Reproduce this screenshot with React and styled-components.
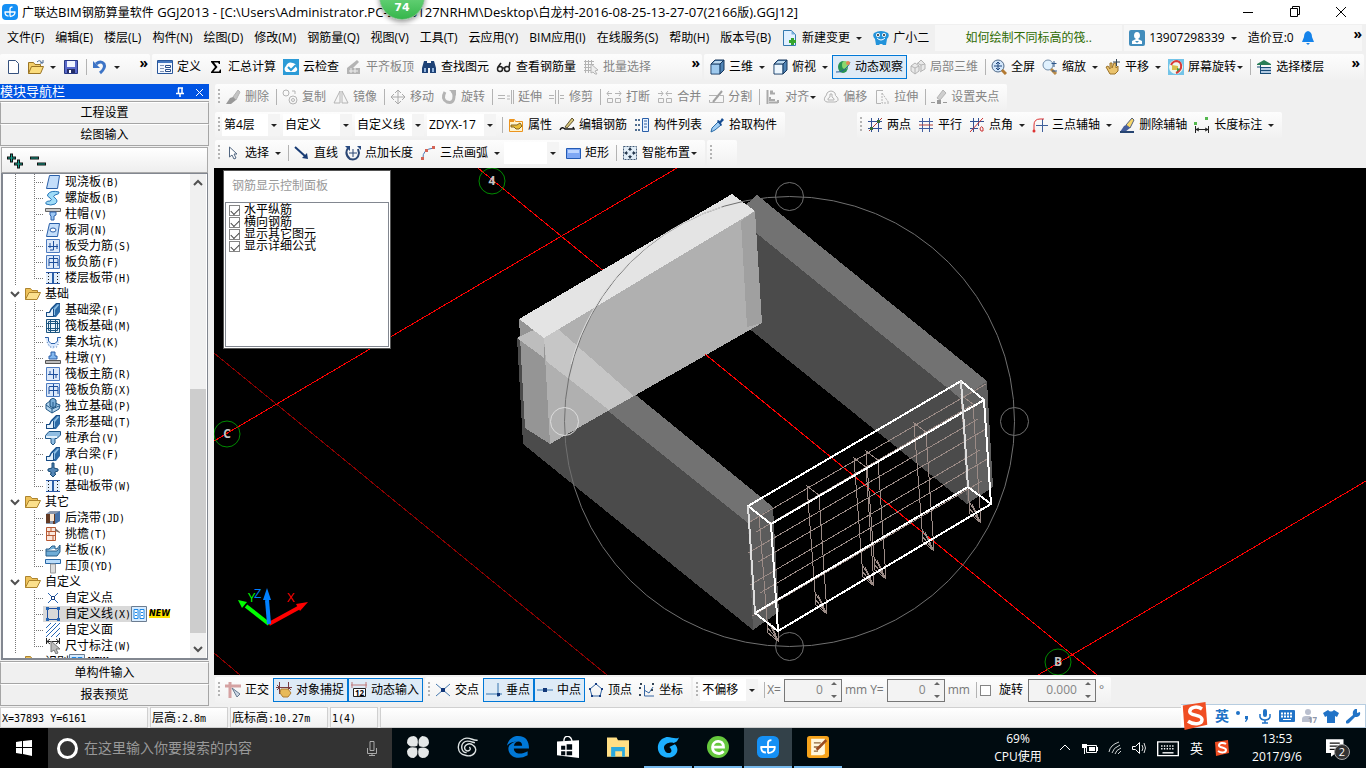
import React from "react";
import styled, { createGlobalStyle, css } from "styled-components";

const UI_FONT = '"Open Sans", "Noto Sans CJK SC", sans-serif';
const FIXED_FONT = '"DejaVu Sans Mono", "Noto Sans CJK SC", monospace';

const GlobalStyle = createGlobalStyle`
  * { box-sizing: border-box; }
  body {
    margin: 0;
    overflow: hidden;
    background: #f0f0f0;
    color: #000;
    font: 12px/16px ${UI_FONT};
  }
  button, input, select {
    margin: 0;
    padding: 0;
    border: 0;
    background: none;
    color: inherit;
    font: inherit;
  }
  button { white-space: nowrap; }
`;

/* ---------- icons, all on a 16px grid ---------- */

const B = "#2a5fa8";
const G = "#b4b4b4";

const line = (d, stroke, strokeWidth = 1) => (
  <path d={d} fill="none" stroke={stroke} strokeWidth={strokeWidth} />
);

const foundation = (
  <>
    <path d="M1 15V10H4L6 6L11 1H15V10L11 15Z" fill="#2d6ba6" />
    <path d="M2 14V11H5L7 7H8V14Z" fill="#e4f1fc" />
    <path d="M8 7L13 2L14 3L10 8V13H9Z" fill="#8cbfe6" />
    {line("M1.500 14.500V10.500H4.500L6.500 6.500L11.500 1.500H15M8.500 7V14.500H1.500", "#174a82")}
  </>
);

const plate = (
  <path d="M4.500 1.500H14.500L12.500 14.500H1.500Z" fill="#c4defa" stroke={B} />
);

const strip = (
  <>
    <path d="M1 2h14v11H1z" fill="#e3effc" />
    {line("M1 2.500H15M1 13.500H15", "#2b58a5")}
    {line("M8 3V13", B, 2)}
    <path d="M3.500 3V13M12.500 3V13" stroke="#222" strokeDasharray="1 2" />
  </>
);

const rebar = (d) => (
  <>
    <path d="M1.500 1.500h13v13h-13z" fill="#dce9fa" stroke="#4e7cc0" />
    {line(d, "#1d4f9c")}
  </>
);

const box3d = (front) => (
  <>
    <path d="M2 5L6 1H15V11L11 15H2Z" fill="#4f83b4" stroke="#17375c" />
    <path d="M2.500 5.500h8v9h-8z" fill={front} />
    <path d="M3 5L6 2H14L11 5Z" fill="#bcd9f0" />
    {line("M2 5H11V15M11 5L15 1", "#17375c")}
  </>
);

const sogou = (
  <>
    <path d="M1 2L14 0L15 13L2 16Z" fill="#f04e23" />
    <path
      d="M12 4C9 2 5 3 5 5.500C5 8 12 7 12 10C12 13 7 13 4 11"
      fill="none"
      stroke="#fff"
      strokeWidth="2"
    />
  </>
);

const glodon = (
  <>
    <rect width="16" height="16" rx="4" fill="#1590f5" />
    <path
      d="M2.500 8H13.500M8 12.500V5Q8 3 10.500 3M3 8Q3 12 6.500 12M13 8Q13 12 8 12.500"
      fill="none"
      stroke="#fff"
      strokeWidth="1.300"
    />
  </>
);

const newPanel = (
  <>
    <path d="M.5.5h15v15H.500z" fill="#d6ebff" stroke="#6b7c90" />
    <path d="M3 3.500h4v9H3zM9 3.500h4v9H9z" fill="#fff" stroke="#1e88e5" />
    {line("M4 6.500H6M4 9.500H6M10 6.500H12M10 9.500H12", "#1e88e5")}
  </>
);

const icons = {
  glodon,
  sogou,
  foundation,
  plate,
  strip,
  newPanel,
  file: <path d="M3.500 1.500H10.500L13.500 4.500V14.500H3.500Z" fill="#fff" stroke="#35517e" />,
  fileAdd: (
    <>
      <path d="M1.500.5H9.500L13.500 4.500V15.500H1.500Z" fill="#e1f0ff" stroke="#3579ae" />
      <path d="M9.500.5V4.500H13.500Z" fill="#79afd9" />
      <path d="M9 8H12V10H14V13H12V15H9V13H7V10H9Z" fill="#35a52b" />
    </>
  ),
  open: (
    <>
      <path d="M.5 14.500V3.500H5.500L7 5.500H12.500V8" fill="#f3ce6a" stroke="#9a7424" />
      <path d="M.5 14.500L3.500 7.500H15.500L12.500 14.500Z" fill="#fbdc7c" stroke="#9a7424" />
      {line("M9 3Q12 0 14 4M12 4H15V1", "#47668e")}
    </>
  ),
  folder: (
    <>
      <path d="M.5 13.500V2.500H5.500L7 4.500H12.500V7" fill="#eec25a" stroke="#ad842e" />
      <path d="M.5 13.500L4 6.500H15.500L12 13.500Z" fill="#fce08c" stroke="#ad842e" />
    </>
  ),
  save: (
    <>
      <path d="M1.500 1.500h13v13h-13z" fill="#5969ca" stroke="#293984" />
      <path d="M4 2h8v6H4z" fill="#f0f4ff" />
      <path d="M4 10h8v4H4z" fill="#252e68" />
      <path d="M6 11h2v3H6z" fill="#fff" />
    </>
  ),
  undo: (
    <>
      {line("M4 5Q9 1 12 5Q14 9 8 14", "#3d74c6", 3)}
      <path d="M1 2V9H8Z" fill="#3d74c6" />
    </>
  ),
  define: (
    <>
      <path d="M.5 1.500h15v13H.5z" fill="#f4f8ff" stroke="#28569b" />
      <path d="M1 2h14v2H1z" fill="#4678bf" />
      {line("M3 6.500H7M3 9.500H7M3 12.500H7", "#7f93b5")}
      <path d="M8.500 6.500h5v2h-5zM8.500 10.500h5v2h-5z" fill="#fff" stroke="#294d88" />
    </>
  ),
  sigma: <path d="M3 2H12V5H11L10 3.500H6L9.500 8L5.500 12.500H11L12 10.500H13V14H3V13L7 8L3 3Z" />,
  cloud: (
    <>
      <path d="M0 0h16v16H0z" fill="#2c9bd7" />
      <path d="M3 13Q0 10 3 7Q5 2 10 4Q14 5 13 8Q16 11 12 13Z" fill="#fff" />
      {line("M5 8L8 11L13 6", "#2c9bd7", 2)}
    </>
  ),
  flush: (
    <>
      <path d="M1 9L11 1L13 3L7 9H14V15H1Z" fill={G} />
      {line("M3 12H12M5 9V14M9 9V14", "#eee")}
    </>
  ),
  find: (
    <>
      <path d="M3 2H6V4H10V2H13L15 9V14H9V9H7V14H1V9Z" fill="#1e4276" />
      <path d="M3 9h2v4H3zM11 9h2v4h-2z" fill="#91b4df" />
    </>
  ),
  glasses: (
    <g fill="none" stroke="#222" strokeWidth="1.500">
      <circle cx="4" cy="10" r="2.500" />
      <circle cx="11" cy="10" r="2.500" />
      <path d="M7 9H8M2 8L5 4M13 8L14 3" />
    </g>
  ),
  batch: (
    <>
      {line("M1 2.500H11M1 5.500H11M1 8.500H8M1 11.500H8M2.500 1V14M5.500 1V14M8.500 1V10", G)}
      <path d="M8 5L15 11L12 12L14 15H12L10 13L8 14Z" fill="#eee" stroke={G} />
    </>
  ),
  cube: box3d("#9ec9ed"),
  cubeTop: box3d("#edf6fd"),
  orbit: (
    <>
      <ellipse cx="8" cy="8" rx="5" ry="6" fill="#289352" />
      <ellipse cx="10" cy="6" rx="3" ry="4" fill="#8bd66e" />
      <path d="M1 13Q6 14 10 10Q14 7 15 3" fill="none" stroke="#275f9c" />
      <circle cx="13" cy="4" r="2" fill="#e38752" />
    </>
  ),
  cubes: (
    <path
      d="M1 7L5 4L9 7V12L5 15L1 12ZM5 9L9 7M5 9V15M5 9L1 7M7 5L11 1L15 5V10L10 13M11 6L15 5M11 6V12M7 4L11 6"
      fill="#e9e9e9"
      stroke={G}
    />
  ),
  full: (
    <>
      <circle cx="7" cy="7" r="6" fill="#d3e7fb" stroke="#526b89" />
      <path d="M11 11L15 15" stroke="#b37a32" strokeWidth="3" />
      {line("M3 7H11M7 3V11M5 5L7 3L9 5M5 9L7 11L9 9", "#20477d")}
    </>
  ),
  zoom: (
    <>
      <circle cx="6" cy="6" r="5" fill="#e0f1fe" stroke="#728ca8" />
      <path d="M9 10L14 15" stroke="#b98b49" strokeWidth="3" />
      {line("M12 2V8M9.500 4.500H14.500M10 12H15", "#2d568a")}
    </>
  ),
  pan: (
    <>
      <path d="M1 8L3 7L5 10V4H7V9L9 4H11V9L13 7V12L10 15H5Z" fill="#eac36d" stroke="#9b722a" />
      {line("M8 3H15M11.500 0V7", "#345")}
    </>
  ),
  rotateScreen: (
    <>
      <path d="M0 0h16v16H0z" fill="#73c4e8" />
      <circle cx="8" cy="8" r="7" fill="#eef7ef" />
      {line("M3 6Q5 2 9 2Q14 3 13 9Q11 13 8 14", "#d83b38", 2)}
      <path d="M4 6l6 1v4H4z" fill="#d9c04a" />
      <path d="M9 9l3 1-3 3z" fill="#3c9b49" />
    </>
  ),
  floors: (
    <>
      <path d="M1 5L8 1L15 5V6H1Z" fill="#287d56" />
      {line("M4.500 6V15M4 8.500H15M4 11.500H15M4 14.500H15M1 8H4", "#174b76")}
      {line("M5 10H15M5 13H15", "#6f9fd0")}
    </>
  ),
  brushGray: (
    <>
      <path d="M8 8L13 1L15 3L11 11Z" fill="#c4c4c4" stroke={G} />
      <path d="M8 8L11 11L6 15H1L5 9Z" fill="#999" />
    </>
  ),
  copy: (
    <g fill="none" stroke={G}>
      <circle cx="4" cy="4" r="3" />
      <circle cx="11" cy="11" r="4" />
      <circle cx="11" cy="11" r="1.500" />
      <path d="M10 2H13V5" />
    </g>
  ),
  mirror: line("M7 2V14H1ZM9 2V14H15Z", G),
  move: line("M1 8H15M8 1V15M5 4L8 1L11 4M5 12L8 15L11 12M4 5L1 8L4 11M12 5L15 8L12 11", "#aaa"),
  rotate: (
    <>
      {line("M4 3Q0 10 6 13Q13 15 13 7Q13 4 11 2", G, 3)}
      <path d="M8 1H15V7Z" fill={G} />
    </>
  ),
  extend: line("M0 6.500H7M0 9.500H7M9 7H12M9 10H12M13.500 1V15M15.500 1V15", G),
  trim: line("M0 6.500H5M0 9.500H5M6.500 1V15M9.500 1V15M11 6.500H15M11 9.500H15", G),
  breakUp: line("M1 4.500H6M3 2L1 4.500L3 7M9 4.500H15M13 2L15 4.500L13 7M1.500 9.500H6.500V13.500H1.500ZM9.500 9.500H14.500V13.500H9.500Z", G),
  merge: line("M1 4.500H6M4 2L6 4.500L4 7M9 4.500H15M11 2L9 4.500L11 7M1.500 9.500H6.500V13.500H1.500ZM9.500 9.500H14.500V13.500H9.500Z", G),
  split: (
    <>
      {line("M1 6.500H9M12 6.500H15.500V13.500H1.500V11", G)}
      {line("M5 13L14 2", "#a1a1a1", 2)}
    </>
  ),
  align: line("M2.500 1V15M5 4.500H10M5 2.500H8M5 8V11H10M4 13.500H13M13 11V14", "#aaa", 2),
  offset: (
    <g fill="none" stroke={G}>
      <path d="M4 13Q0 12 2 8Q4 6 4 4Q8 0 12 4Q12 7 14 8Q17 12 12 13Z" />
      <path d="M5 10Q5 9 7 8L7 5H9V8Q12 10 11 11H5Z" />
    </g>
  ),
  stretch: (
    <>
      {line("M9 1.500H2.500V14.500H7", G)}
      <path d="M8 4V14H15Z" fill="none" stroke={G} strokeDasharray="2 1" />
    </>
  ),
  gripEdit: (
    <>
      <path d="M6 9L12 1L15 4L9 11Z" fill="#cecece" stroke={G} />
      <path d="M0 13h4v1H0zM6 11h4v4H6zM12 13h4v1h-4z" fill="#999" />
    </>
  ),
  props: (
    <>
      <path d="M1.500 2.500h5l1 2h7v10h-13z" fill="#fff3cc" stroke="#ec941e" />
      <path d="M2 3h4v2H2z" fill="#ec941e" />
      <path d="M3 8h6L12 6l2 3-3 3H8L6 10H3z" fill="#e9bd35" stroke="#806323" />
    </>
  ),
  editBar: (
    <>
      <path d="M1 13Q3 9 6 12H15L14 10" fill="none" stroke="#111" strokeWidth="1.500" />
      <path d="M6 10L13 1L15 3L8 11Z" fill="#d9c77a" stroke="#625635" />
    </>
  ),
  list: (
    <>
      <path d="M8.500 1.500h6v13h-6z" fill="#e7f1ff" stroke={B} />
      {line("M10 4H13M10 7H13M10 10H13", "#315f9d")}
      <path d="M1 2h2v2H1zM1 7h2v2H1zM1 12h2v2H1zM4 2h2v2H4zM4 7h2v2H4zM4 12h2v2H4z" fill="#506e91" />
    </>
  ),
  pick: (
    <>
      <path d="M2 15L3 11L9 5L12 8L6 13Z" fill="#9fcdf5" stroke="#2a6ba6" />
      <path d="M8 4L9 3L11 4L13 1L15 3L12 6L13 8L12 9Z" fill="#174d92" />
    </>
  ),
  arrow: <path d="M4.500 2V12L7 10L9 14L11 13L9 9H12Z" fill="#fff" stroke="#516681" />,
  lineTool: (
    <>
      {line("M1 2L12 12", "#183b74", 2)}
      <path d="M14 14L8 13L13 8Z" fill="#183b74" />
    </>
  ),
  pointLength: (
    <>
      {line("M3 3Q-1 9 5 14Q13 16 14 8L13 4", "#2a4674", 2)}
      {line("M8 4V12M4 8H12", "#2a4674")}
      <path d="M0 1H5V6ZM12 1H16V5Z" fill="#294a80" />
    </>
  ),
  arc: (
    <>
      {line("M3 14Q2 4 14 3", "#4e7bb5")}
      <path d="M1 12h3v3H1zM5 4h3v3H5zM12 1h3v3h-3z" fill="#d46456" />
    </>
  ),
  rect: (
    <>
      <path d="M1.500 3.500h14v10h-14z" fill="#7ea7f4" stroke="#235ab4" />
      <path d="M3 5h11v3H3z" fill="#bdd5ff" />
    </>
  ),
  smart: (
    <>
      <path d="M1.500 1.500h13v13h-13z" fill="#e1edf7" stroke="#425a76" strokeDasharray="2 1" />
      <path d="M8 2L10 5H6ZM8 14L10 11H6ZM2 8L5 6V10ZM14 8L11 6V10Z" fill="#24364c" />
      {line("M8 4V6M8 10V12M4 8H6M10 8H12", "#24364c")}
    </>
  ),
  twoPoint: (
    <>
      {line("M1 4.500H15M1 11.500H15M4.500 1V15M11.500 1V15", "#335394")}
      {line("M2 14L15 1", "#b13e38")}
      <path d="M3 10h3v3H3zM10 3h3v3h-3z" fill="#376b34" />
    </>
  ),
  parallel: (
    <>
      {line("M1 4.500H15M1 11.500H15M4.500 1V15M11.500 1V15", "#405da0")}
      {line("M1 8H15", "#b13e38")}
    </>
  ),
  pointAngle: (
    <>
      {line("M1 4.500H15M1 11.500H9M4.500 1V15M9.500 1V9", "#335394")}
      {line("M1 15L14 1M11 12Q12 8 14 11V14H12Z", "#c33")}
    </>
  ),
  threePoint: (
    <>
      {line("M4 8.500H16M10.500 2V15", "#3e5f9b")}
      {line("M2 13V8Q2 2 8 2H12", "#d33")}
      <circle cx="2" cy="14" r="1.500" fill="#d33" />
    </>
  ),
  brush: (
    <>
      <path d="M7 8L13 1L15 3L11 11Z" fill="#f8d76a" stroke="#54617b" />
      <path d="M7 8L11 11L6 15H1L5 9Z" fill="#455e9c" />
      <path d="M1 14h14v2H1z" fill="#274572" />
    </>
  ),
  dimension: (
    <>
      <path d="M0 5h3v3H0zM11 0h3v3h-3z" fill="#54b84e" />
      {line("M1.500 9V16M14.500 9V16M2 12.500H14M5 11L2 12.500L5 14M11 11L14 12.500L11 14", "#222")}
    </>
  ),
  ortho: (
    <>
      {line("M0 4H16M5 0V16", "#d5a2a2", 3)}
      <path d="M7 6L15 12L12 15Z" fill="#ccd8e6" stroke="#64778d" />
    </>
  ),
  snap: (
    <>
      {line("M0 5.500H16M3.500 0V12M12.500 0V9M1 8L3.500 5.500L1 3M15 8L12.500 5.500", "#783d43")}
      <path d="M5 7H12L15 11L12 15H7L4 11Z" fill="#e7ba59" stroke="#ae7d32" />
    </>
  ),
  dynInput: (
    <>
      {line("M0 3H16M1 0V6M15 0V6", "#bf7979")}
      <path d="M2.500 6.500h12v8h-12z" fill="#fff" stroke="#222" />
      <text x="4" y="14" fontSize="8" fontWeight="700">12</text>
    </>
  ),
  cross: (
    <>
      {line("M1 2L15 14M1 14L15 2", "#4679af")}
      <path d="M6 6h4v4H6z" fill="#12387a" />
    </>
  ),
  perp: (
    <>
      {line("M0 12H16M12 1V15", "#3674ae")}
      <path d="M11 11h3v3h-3z" fill="#12387a" />
    </>
  ),
  mid: (
    <>
      {line("M0 8H16", "#3674ae")}
      <path d="M6 6h4v4H6z" fill="#12387a" />
    </>
  ),
  vertex: (
    <>
      {line("M8 2L14 7L12 14H4L2 7Z", "#3465a2")}
      <path d="M7 1h2v2H7zM1 6h2v2H1zM13 6h2v2h-2zM3 13h2v2H3zM11 13h2v2h-2z" fill="#153b80" />
    </>
  ),
  coord: (
    <>
      {line("M5.500 3V14H15M5 8L10 11L14 5", "#3465a2")}
      <path d="M1 1h2v2H1zM0 5h2v2H0zM0 12h2v2H0zM13 1h2v2h-2zM12 7h2v2h-2z" fill="#345" />
    </>
  ),
  user: (
    <>
      <rect width="16" height="16" rx="2" fill="#428dbc" />
      <path d="M8 2Q11 2 11 6Q11 8 9 9L13 11V14H3V11L7 9Q5 8 5 6Q5 2 8 2Z" fill="#fff" />
      <path d="M6 11L8 13L10 11Z" fill="#428dbc" />
    </>
  ),
  robot: (
    <>
      <path d="M1 3Q8-1 15 3Q17 6 14 9L13 15H10L9 14H7L6 15H3L2 9Q-1 6 1 3Z" fill="#2393da" />
      <circle cx="5" cy="5" r="2" fill="#fff" />
      <circle cx="11" cy="5" r="2" fill="#fff" />
      <circle cx="5" cy="5" r="1" fill="#222" />
      <circle cx="11" cy="5" r="1" fill="#222" />
      {line("M4 8Q8 12 12 8", "#fff")}
    </>
  ),
  bell: <path d="M8 1Q12 2 12 7L14 12H2L4 7Q4 2 8 1ZM6 13H10L8 15Z" fill="#1583ea" />,
  spiral: (
    <path
      d="M3 4Q6 0 14 2Q15 4 10 5Q7 6 10 8Q14 11 10 14Q6 16 1 14Q0 11 5 11Q8 10 5 8Q1 6 3 4Z"
      fill="#9fdcf8"
      stroke="#2a78b8"
    />
  ),
  cap: (
    <>
      <path d="M.5 2.500h15v3H.5z" fill="#ccc" stroke="#666" />
      <path d="M5 6h6v3L9 10v4H6v-4L5 9z" fill="#9cc7f4" stroke={B} />
    </>
  ),
  hole: (
    <>
      {plate}
      <ellipse cx="8" cy="8" rx="3" ry="2" fill="#fff" stroke={B} />
    </>
  ),
  rebarMain: rebar("M3 8.500H13M8.500 3V12H5M5 5V10M12 6V11"),
  rebarNeg: rebar("M4 4.500H13M4 8.500H13M4 5V12M13 5V12M8.500 2V14"),
  rebarCross: rebar("M3 8.500H13M8.500 3V13M5 5V8M11 8V12"),
  raft: (
    <>
      <path d="M1.500 1.500h13v13h-13z" fill="#e8f2fa" stroke="#1c5580" />
      {line("M3.500 3.500H12.500V12.500H3.500ZM1 5.500H15M1 10.500H15M5.500 1V15M10.500 1V15", "#1c5580")}
    </>
  ),
  pit: (
    <>
      <path d="M0 3H4V7L6 9H10L12 7V3H16L12 12L8 15L3 12Z" fill="#d9e9ff" />
      {line("M0 3.500H3.500V7L6 9.500H10L12.500 7V3.500H16", B)}
      <path d="M2 8L5 13H12L14 8" fill="none" stroke="#4b74aa" strokeDasharray="1 2" />
    </>
  ),
  pier: (
    <>
      <path d="M6 2H10V6H12V9H4V6H6Z" fill="#83b8ef" stroke={B} />
      <path d="M.5 10.500h15v3H.5z" fill="#bbb" stroke="#555" />
    </>
  ),
  pad: (
    <>
      <path d="M1 6L5 3L15 7L14 11L7 15L1 11Z" fill="#b1d3ed" stroke="#205787" />
      <path d="M5 2L8 0L11 2V8L8 10L5 8Z" fill="#79add8" stroke="#174b76" />
      {line("M1 7L7 11L14 8M7 11V15M8 4V9", "#205787")}
    </>
  ),
  pileCap: (
    <>
      <path d="M.5 5.500L4 1.500H15.500V5L12 8.500H10V13L8 15L6 13V8.500H.5Z" fill="#90bde2" stroke="#205787" />
      <path d="M1 6h11v2H1z" fill="#e0effb" />
    </>
  ),
  pile: (
    <path d="M7 1H9V6L13 7V9L10 10V12H11L8 15L5 12H6V10L3 9V7L7 6Z" fill="#5587b6" stroke="#174b76" />
  ),
  postCast: (
    <>
      <path d="M1 4L5 1H15V11L10 14H1Z" fill="#8896ac" />
      <path d="M1 4h4v9H1zM8 4h2v10H8z" fill="#633a24" />
      <path d="M5 4h4v7H5z" fill="#f9e6d1" />
      <path d="M10 4l5-3v10l-5 3z" fill="#4672a9" />
    </>
  ),
  eave: (
    <>
      <path d="M1.500 1.500H10.500V14.500H1.500Z" fill="#fbe7dc" stroke="#b75933" />
      {line("M2 5.500H10M2 9.500H10M6 2V5M4 5V9M8 9V14", "#b75933")}
      <path d="M10 2L15 6V7L10 5Z" fill="#7f6a60" />
    </>
  ),
  panelBoard: (
    <path d="M1 7H4L7 4H10V7H12L15 3V10L12 14H1ZM1 9H12L15 5" fill="#6facd6" stroke="#295e8a" />
  ),
  coping: (
    <>
      <path d="M.5 1.500h15v4H.5z" fill="#b9dcfa" stroke="#2867a6" />
      <path d="M5.500 6h5v9h-5z" fill="#ddd" stroke="#999" />
    </>
  ),
  customPoint: (
    <>
      {line("M3 3L13 13M3 13L13 3", "#2a64ae")}
      <path d="M6.500 6.500h3v3h-3z" fill="#fff" stroke="#153d80" />
    </>
  ),
  customLine: (
    <>
      {line("M2.500 2.500H13.500V13.500H2.500Z", "#1f4f9f")}
      <path d="M1 1h3v3H1zM12 1h3v3h-3zM1 12h3v3H1zM12 12h3v3h-3z" fill="#2868b5" />
    </>
  ),
  customArea: line("M1 6L6 1M1 11L11 1M1 15L15 1M6 15L15 6M11 15L15 11", "#2868b5"),
  measure: (
    <>
      {line("M1.500 0V6M14.500 0V6M2 3.500H14M5 1L2 3.500L5 6M11 1L14 3.500L11 6", "#222")}
      <path d="M6 3V14L9 12L11 16L13 15L11 11H15Z" fill="#bcbcbc" stroke="#777" />
    </>
  ),
  mic: (
    <>
      <rect x="6" y="1" width="4" height="8" rx="2" fill="currentColor" />
      <path d="M3 6V9Q4 12 8 12Q12 12 13 9V6M8 12V15M5 15H11" fill="none" stroke="currentColor" strokeWidth="1.500" />
    </>
  ),
  micThin: (
    <path d="M6 1.500H10V10.500H6ZM3.500 8V13.500H12.500V8M8 13V15.500M5 15.500H11" fill="none" stroke="currentColor" />
  ),
  keyboard: (
    <>
      <path d="M.5 3.500h15v10H.5z" fill="none" stroke="currentColor" />
      <path d="M3 6.500H13M3 8.500H13" stroke="currentColor" strokeDasharray="1 1" />
      <path d="M4 11.500H12" stroke="currentColor" />
    </>
  ),
  keyboardBlue: (
    <>
      <rect y="2" width="16" height="12" rx="1" fill="#2173c7" />
      <path d="M2 5.500H14M2 8.500H14" stroke="#fff" strokeWidth="2" strokeDasharray="2 1" />
      <path d="M4 11.500H12" stroke="#fff" />
    </>
  ),
  shirt: <path d="M5 2Q8 5 11 2L16 5L14 9L12 8V15H4V8L2 9L0 5Z" fill="currentColor" />,
  wrench: (
    <path d="M1 13L8 7Q7 3 10 1H12V5L15 4Q16 8 12 9H10L4 15Q2 16 1 15Z" fill="currentColor" />
  ),
  person: (
    <>
      <circle cx="7" cy="4" r="3" fill="#b9bfce" />
      <path d="M1 14V11Q1 8 5 8H9L11 10V14Z" fill="#b9bfce" />
      <text x="7" y="15" fontSize="8" fill="#8c97ac">17</text>
    </>
  ),
  comma: (
    <>
      <circle cx="3" cy="5" r="2" fill="currentColor" />
      <path d="M10 8h3v3l-2 3h-1l1-3h-1z" fill="currentColor" />
    </>
  ),
  windows: <path d="M0 2L6 1V7H0ZM7 1L16 0V7H7ZM0 8H6V14L0 13ZM7 8H16V16L7 14Z" fill="#fff" />,
  fan: (
    <g fill="#e4e8e8">
      <path d="M7.500 7Q2 9 0 5Q0 0 5 0Q9 1 7.500 7Z" />
      <path d="M9 7.500Q7 2 11 0Q16 0 16 5Q15 9 9 7.500Z" />
      <path d="M8.500 9Q14 7 16 11Q16 16 11 16Q7 15 8.500 9Z" />
      <path d="M7 8.500Q9 14 5 16Q0 16 0 11Q1 7 7 8.500Z" />
    </g>
  ),
  swirl: (
    <path
      d="M15 3C12 4 9 0 5 2C-1 5 0 13 6 14C12 16 16 10 12 7C9 4 4 7 6 10C8 12 11 10 9 8M13 5C10 4 8 3 6 4C2 6 3 12 7 12"
      fill="none"
      stroke="#dce2e2"
    />
  ),
  swirlBlue: (
    <path
      d="M16 1C13 3 10 0 6 1C-1 3-1 13 5 15C12 18 18 11 13 6L9 8C13 12 8 14 6 11C3 7 8 4 12 5C15 4 15 3 16 1Z"
      fill="#1cafff"
    />
  ),
  edge: (
    <path
      d="M0 7C1 2 5 0 8 0C14 0 16 4 16 9H5C5 13 10 14 15 11V14C8 18 1 15 1 9C1 6 5 4 8 4C4 4 2 5 0 7ZM5 7H11C11 3 6 3 5 7Z"
      fill="#0078d7"
    />
  ),
  store: (
    <>
      <path d="M0 4L16 3V16L0 14Z" fill="#fff" />
      {line("M5 4C5-1 10-1 11 4", "#fff")}
      <path d="M3 7h3v3H3zM7 6h4v4H7zM3 11h3v3H3zM7 11h4v3H7z" fill="#000a10" />
    </>
  ),
  explorer: (
    <>
      <path d="M0 1h7l1 2h8v12H0z" fill="#ffdf85" />
      <path d="M3 8h10v7h-2v-4H6v4H3z" fill="#29a9df" />
    </>
  ),
  browser: (
    <>
      <circle cx="8" cy="8" r="8" fill="#65c83d" />
      <path
        d="M12 11C10 14 4 13 4 8C4 3 12 2 12 8H5"
        fill="none"
        stroke="#fff"
        strokeWidth="2"
      />
    </>
  ),
  notes: (
    <>
      <rect width="16" height="16" rx="2" fill="#f5a21b" />
      <path d="M3 2h10v11l-2 1H3z" fill="#fff7dd" />
      {line("M5 5H10M5 8H10M5 11H8", "#8f673a")}
      {line("M7 10L14 3", "#9a4c21", 2)}
    </>
  ),
  chevronUp: line("M3 10L8 5L13 10", "#fff"),
  battery: (
    <>
      <path d="M4.500 5.500h10v7h-10z" fill="none" stroke="#fff" />
      <path d="M7 7h6v4H7zM15 7h1v4h-1zM0 4h5v4H3v6H2V8H0z" fill="#fff" />
    </>
  ),
  wifi: line("M2 12Q3 5 12 2M5 13Q6 8 13 5M8 14Q9 10 14 8M11 14L14 11", "#d0d5d5"),
  sound: (
    <>
      <path d="M0.500 6.500H3.500L7.500 2.500V13.500L3.500 9.500H.500Z" fill="none" stroke="#fff" />
      {line("M10 5Q12 8 10 11M12 3Q15 8 12 13", "#ddd")}
    </>
  ),
  notice: (
    <>
      <path d="M0 1h14v11H8l-4 3v-3H0z" fill="#fff" />
      {line("M3 4H11M3 6.500H11M3 9H9", "#111")}
    </>
  ),
};

const IconSvg = styled.svg`
  display: block;
  flex: none;
  width: ${({ $size }) => $size}px;
  height: ${({ $size }) => $size}px;
`;

const Icon = ({ name, size = 16 }) => (
  <IconSvg viewBox="0 0 16 16" $size={size} aria-hidden="true">
    {icons[name]}
  </IconSvg>
);

/* ---------- shared toolbar parts ---------- */

const Caret = styled.span`
  flex: none;
  width: 0;
  height: 0;
  margin-left: ${({ $near }) => ($near ? -3 : 2)}px;
  border: solid transparent;
  border-width: 3px 3px 0;
  border-top-color: #222;
`;

const ToolGroup = styled.div`
  display: flex;
  align-items: center;
  height: 26px;
  flex: ${({ $grow }) => ($grow ? "1 1 0" : "none")};
  min-width: ${({ $min }) => $min || 0}px;
  padding: 0 ${({ $end = 4 }) => $end}px 0 2px;
  background: linear-gradient(#fdfdfd, #f1f1f1);
  border-radius: 2px;
`;

const Grip = styled.span`
  flex: none;
  width: 2px;
  height: 16px;
  margin: 0 2px 0 1px;
  background: repeating-linear-gradient(#b4b4b4 0 2px, transparent 2px 4px);
`;

const Divider = styled.span`
  flex: none;
  width: 1px;
  height: 16px;
  margin: 0 2px 0 3px;
  background: #b3b3b3;
`;

const ToolButton = styled.button`
  display: flex;
  align-items: center;
  gap: 4px;
  flex: none;
  height: 24px;
  padding: 0 3px 0 2px;
  border: 1px solid transparent;
  color: ${({ disabled }) => (disabled ? "#858585" : "#000")};
  ${({ $pressed }) =>
    $pressed &&
    css`
      border-color: #0078d7;
      background: #deebf7;
    `}
`;

const More = styled.button`
  align-self: flex-start;
  margin-left: auto;
  height: 16px;
  font: 700 14px/13px ${UI_FONT};
`;

const Tool = ({ icon, label, caret, near, off, on }) => (
  <ToolButton type="button" disabled={off} $pressed={on} aria-label={label || icon}>
    <Icon name={icon} />
    {label}
    {caret && <Caret $near={near} />}
  </ToolButton>
);

const ToolSet = ({ items }) =>
  items.map((item, i) => (item === "|" ? <Divider key={i} /> : <Tool key={i} {...item} />));

const ComboBox = styled.label`
  display: flex;
  align-items: center;
  flex: none;
  width: ${({ $width }) => $width}px;
  height: 22px;
  margin-right: 3px;
  padding: 0 3px 0 2px;
  background: linear-gradient(to left, #f4f4f4 12px, #fff 12px);

  select {
    flex: 1;
    min-width: 0;
    appearance: none;
    outline: none;
  }
`;

const Combo = ({ value, width, name }) => (
  <ComboBox $width={width}>
    <select aria-label={name} defaultValue={value}>
      <option>{value}</option>
    </select>
    <Caret />
  </ComboBox>
);

/* ---------- window frame ---------- */

const Page = styled.div`
  display: flex;
  flex-direction: column;
  height: 100vh;
  overflow: hidden;
`;

const TitleBar = styled.header`
  position: relative;
  display: flex;
  align-items: center;
  gap: 4px;
  flex: none;
  height: 24px;
  padding: 0 16px 0 2px;
  background: #fff;
  white-space: nowrap;
`;

const TitleText = styled.span`
  font-size: 13px;
`;

const Han = styled.span`
  font-size: 12px;
`;

const CpuBall = styled.span`
  position: absolute;
  top: -26px;
  left: 379px;
  width: 46px;
  height: 46px;
  padding-top: 24px;
  border: 1px solid #90bd97;
  border-radius: 50%;
  background: linear-gradient(#65d176 50%, #35b64b);
  box-shadow: 0 2px 5px #0006;
  color: #fff;
  font: 700 11px/18px "DejaVu Sans", sans-serif;
  text-align: center;
`;

const WindowButtons = styled.div`
  display: flex;
  gap: 30px;
  margin-left: auto;

  button, svg {
    display: block;
    width: 16px;
    height: 16px;
  }
`;

const MenuBar = styled.nav`
  display: flex;
  align-items: center;
  flex: none;
  height: 28px;
  padding: 0 4px 0 2px;
`;

const MenuItem = styled.button`
  flex: none;
  padding: 0 6px 0 5px;
`;

const MenuEntry = styled(MenuItem)`
  display: flex;
  align-items: center;
  gap: 4px;
`;

const Tip = styled.a`
  flex: none;
  width: 187px;
  height: 26px;
  margin-right: 2px;
  background: #f7f7f7;
  color: #2e6b00;
  line-height: 26px;
  text-align: center;
  text-decoration: none;
`;

const Account = styled.div`
  display: flex;
  align-items: center;
  flex: 1;
  height: 26px;
  background: #f7f7f7;
`;

const TopTools = styled.div`
  display: flex;
  gap: 2px;
  flex: none;
  height: 32px;
  padding: 2px 2px 0 0;
`;

const Body = styled.div`
  display: flex;
  flex: 1;
  min-height: 0;
`;

const Main = styled.main`
  display: flex;
  flex-direction: column;
  flex: 1;
  min-width: 0;
`;

const ToolRow = styled.div`
  display: flex;
  align-items: flex-start;
  gap: ${({ $gap = 2 }) => $gap}px;
  flex: none;
  height: ${({ $tall }) => ($tall ? 32 : 28)}px;
  padding: ${({ $tall }) => ($tall ? 2 : 0)}px 0 0 1px;
`;

/* ---------- navigation panel ---------- */

const Side = styled.aside`
  display: flex;
  flex-direction: column;
  flex: none;
  width: 209px;
  margin-right: 5px;
  padding-bottom: 1px;
`;

const SideTitle = styled.h2`
  display: flex;
  align-items: center;
  gap: 10px;
  height: 15px;
  margin: 0 0 3px;
  padding-right: 4px;
  background: #0054e3;
  color: #fff;
  font: 400 13px/15px ${UI_FONT};

  button:first-of-type { margin-left: auto; }
  svg { display: block; width: 10px; height: 10px; }
`;

const SideButton = styled.button`
  flex: none;
  height: 22px;
  border: 1px solid #a5a5a5;
  border-top-color: #fff;
  background: #f0f0f0;
  box-shadow: 0 -1px #a5a5a5;
`;

const SideTools = styled.div`
  display: flex;
  align-items: center;
  flex: none;
  height: 26px;
  margin: 1px 1px 0;
  padding: 1px 4px 0;
  background: linear-gradient(#fff, #eee);
  border: 1px solid #aaa;

  svg { display: block; width: 40px; height: 16px; }
`;

const TreeBox = styled.div`
  display: flex;
  flex: 1;
  min-height: 0;
  margin: 0 1px 2px;
  border: 2px solid #828790;
  border-width: 1px 1px 2px 2px;
  background: #fff;
  overflow: hidden;
`;

const Tree = styled.ul`
  flex: 1;
  min-width: 0;
  margin: 0;
  padding: 0;
  list-style: none;
  overflow: hidden;
`;

const TreeRow = styled.li`
  display: flex;
  align-items: center;
  height: 16px;
  padding-left: ${({ $folder }) => ($folder ? 4 : 12)}px;

  > svg { flex: none; }
`;

const Branch = styled.span`
  flex: none;
  width: ${({ $width }) => $width}px;
  height: 16px;
  background:
    repeating-linear-gradient(#777 0 1px, transparent 1px 2px) 0 0 / 1px ${({ $last }) => ($last ? "8px" : "16px")} no-repeat,
    repeating-linear-gradient(to right, #777 0 1px, transparent 1px 2px) 0 8px / ${({ $tick }) => ($tick ? "100%" : "0")} 1px no-repeat;
`;

const TreeLabel = styled.button`
  display: flex;
  align-items: center;
  gap: 4px;
  height: 16px;
  padding: 0 0 0 2px;
  background: ${({ $selected }) => ($selected ? "#d9d9d9" : "none")};
`;

const Latin = styled.span`
  font: 10px/16px ${FIXED_FONT};
`;

const NewMark = styled.span`
  margin-left: 2px;
  background: #ffe300;
  font: italic 700 8px/8px "DejaVu Sans", sans-serif;
`;

const ScrollBar = styled.div`
  display: flex;
  flex-direction: column;
  flex: none;
  width: 16px;
  padding: 1px 0;
  margin-right: 1px;
  background: #f0f0f0;
`;

const ScrollThumb = styled.span`
  flex: 245;
  background: #cdcdcd;
`;

const ScrollTrack = styled.span`
  flex: ${({ $part }) => $part};
`;

const Chevron = ({ up }) => (
  <svg width="16" height="16" viewBox="0 0 16 16" aria-hidden="true">
    <path d={up ? "M4 10L8 6L12 10" : "M4 6L8 10L12 6"} fill="none" stroke="#505050" strokeWidth="2" />
  </svg>
);

const tree = [
  ["现浇板", "(B)", "plate"],
  ["螺旋板", "(B)", "spiral"],
  ["柱帽", "(V)", "cap"],
  ["板洞", "(N)", "hole"],
  ["板受力筋", "(S)", "rebarMain"],
  ["板负筋", "(F)", "rebarNeg"],
  ["楼层板带", "(H)", "strip"],
  ["基础"],
  ["基础梁", "(F)", "foundation"],
  ["筏板基础", "(M)", "raft"],
  ["集水坑", "(K)", "pit"],
  ["柱墩", "(Y)", "pier"],
  ["筏板主筋", "(R)", "rebarCross"],
  ["筏板负筋", "(X)", "rebarNeg"],
  ["独立基础", "(P)", "pad"],
  ["条形基础", "(T)", "foundation"],
  ["桩承台", "(V)", "pileCap"],
  ["承台梁", "(F)", "foundation"],
  ["桩", "(U)", "pile"],
  ["基础板带", "(W)", "strip"],
  ["其它"],
  ["后浇带", "(JD)", "postCast"],
  ["挑檐", "(T)", "eave"],
  ["栏板", "(K)", "panelBoard"],
  ["压顶", "(YD)", "coping"],
  ["自定义"],
  ["自定义点", "", "customPoint"],
  ["自定义线", "(X)", "customLine", true],
  ["自定义面", "", "customArea"],
  ["尺寸标注", "(W)", "measure"],
];

const NavPanel = () => (
  <Side>
    <SideTitle>
      模块导航栏
      <button type="button" aria-label="固定">
        <svg viewBox="0 0 10 10"><path d="M3 1H8M3.500 1V6M7 1V6M1 6.500H9M5 7V10" fill="none" stroke="#fff" strokeWidth="1.500" /></svg>
      </button>
      <button type="button" aria-label="关闭">
        <svg viewBox="0 0 10 10"><path d="M1 2L8 9M8 2L1 9" stroke="#fff" /></svg>
      </button>
    </SideTitle>
    <SideButton type="button">工程设置</SideButton>
    <SideButton type="button">绘图输入</SideButton>
    <SideTools>
      <svg viewBox="0 0 40 16" aria-hidden="true">
        <path d="M1 5H10M5.500 0.500V9.500M8 11H17M12.500 6.500V15.500M24 5H33M31 11H40" stroke="#111" strokeWidth="3" />
        <path d="M2 5H9M5.500 1.500V8.500M9 11H16M12.500 7.500V14.500M25 5H32M32 11H39" stroke="#14a08e" />
      </svg>
    </SideTools>
    <TreeBox>
      <Tree>
        {tree.map(([name, key, icon, selected], i) =>
          icon ? (
            <TreeRow key={i}>
              <Branch $width={19} />
              <Branch $width={9} $tick $last={!tree[i + 1] || !tree[i + 1][2]} />
              <TreeLabel type="button" $selected={selected}>
                <Icon name={icon} />
                <span>
                  {name}
                  <Latin>{key}</Latin>
                </span>
              </TreeLabel>
              {selected && <Icon name="newPanel" />}
              {selected && <NewMark>NEW</NewMark>}
            </TreeRow>
          ) : (
            <TreeRow key={i} $folder>
              <Chevron />
              <TreeLabel type="button">
                <Icon name="folder" />
                {name}
              </TreeLabel>
            </TreeRow>
          )
        )}
        <TreeRow $folder>
          <Chevron />
          <TreeLabel type="button">
            <Icon name="folder" />
            识别
          </TreeLabel>
          <Icon name="newPanel" />
          <NewMark>NEW</NewMark>
        </TreeRow>
      </Tree>
      <ScrollBar>
        <Chevron up />
        <ScrollTrack $part={198} />
        <ScrollThumb />
        <ScrollTrack $part={8} />
        <Chevron />
      </ScrollBar>
    </TreeBox>
    <SideButton type="button">单构件输入</SideButton>
    <SideButton type="button">报表预览</SideButton>
  </Side>
);

/* ---------- 3D view ---------- */

const Viewport = styled.section`
  position: relative;
  display: flex;
  flex: 1;
  min-height: 0;
  background: #000;
`;

const SceneSvg = styled.svg`
  flex: 1;
  width: 100%;
  min-height: 0;
`;

const FloatPanel = styled.fieldset`
  position: absolute;
  top: 2px;
  left: 9px;
  display: flex;
  flex-direction: column;
  width: 168px;
  height: 179px;
  margin: 0;
  padding: 0 1px 1px;
  border: 1px solid #555;
  background: #fff;
`;

const FloatTitle = styled.div`
  padding: 7px 7px 8px;
  color: #999;
`;

const CheckList = styled.div`
  flex: 1;
  padding: 1px 3px;
  border: 1px solid #828790;

  label {
    display: flex;
    align-items: center;
    gap: 4px;
    height: 12px;
    line-height: 12px;
  }
`;

const Check = styled.input`
  appearance: none;
  display: grid;
  place-items: center;
  flex: none;
  width: 11px;
  height: 11px;
  border: 1px solid #858585;
  background: #fff;

  &:checked::after {
    content: "";
    width: 7px;
    height: 4px;
    border: solid #444;
    border-width: 0 0 1px 1px;
    transform: rotate(-45deg);
  }
`;

const stirrups = [[759, 514], [807, 486], [854, 458], [866, 451], [914, 423], [961, 395]];

const bars = [
  "M748 523L986 384",
  "M756 532L972 405",
  "M748 553L978 419",
  "M758 562L986 429",
  "M750 585L980 450",
  "M760 593L989 458",
  "M752 616L982 481",
];

const AxisMark = ({ x, y, label }) => (
  <>
    <circle cx={x} cy={y} r="13" fill="none" stroke="#008a00" />
    <text x={x} y={y + 4} fill="#c4c4c4" fontSize="12" fontWeight="700" textAnchor="middle">
      {label}
    </text>
  </>
);

const Scene = () => (
  <SceneSvg viewBox="214 168 1152 507" preserveAspectRatio="xMinYMin slice">
    <g shapeRendering="crispEdges">
      <path d="M214 353L607 675M214 653L240 675" stroke="#8a0000" />
      <path d="M478 168L1097 675M214 441L677 168M1038 675L1366 481" stroke="#f00" />
      <polygon points="741,215 961,391 967,504 747,327" fill="#4b4b4b" />
      <polygon points="734,215 757,195 987,381 961,399" fill="#727272" />
      <polygon points="961,399 987,381 993,487 967,504" fill="#606060" />
      <polygon points="517,338 748,523 753,630 523,444" fill="#4b4b4b" />
      <polygon points="517,338 544,320 773,507 748,523" fill="#727272" />
      <polygon points="748,523 773,507 779,612 753,630" fill="#5c5c5c" />
      <polygon points="519,319 544,338 550,444 525,428" fill="#959595" />
      <polygon points="517,338 544,325 544,358" fill="#bdbdbd" />
      <polygon points="544,338 755,211 762,323 550,444" fill="#b0b0b0" />
      <polygon points="544,338 557,328 634,396 609,410 546,361" fill="#c6c6c6" />
      <polygon points="741,221 755,211 762,323 747,327" fill="#a0a0a0" />
      <polygon points="519,319 732,194 755,211 544,338" fill="#e4e4e4" />
      <path d="M705 354L960 563" stroke="#f00" />
    </g>
    <g fill="none" stroke="#707070">
      <circle cx="789.500" cy="421.500" r="225" />
      <circle cx="789.500" cy="196.500" r="14" />
      <circle cx="1014.500" cy="421.500" r="14" />
      <circle cx="789.500" cy="646.500" r="14" />
      <circle cx="564.500" cy="421.500" r="14" stroke="#ddd" />
      <path d="M571 364A225 225 0 0 1 722 207" stroke="#ddd" />
    </g>
    <g fill="none" stroke="#9b8b86" shapeRendering="crispEdges">
      {bars.map((d) => (
        <path key={d} d={d} />
      ))}
      {stirrups.map(([x, y]) => (
        <path
          key={x}
          d={`M${x} ${y}l12 9l8 119l-12 -22zM${x + 8} ${y + 106}v12l12 10l-9 -19M${x + 8} ${y + 113}l10 12`}
        />
      ))}
    </g>
    <g fill="none" stroke="#fff" strokeWidth="2" shapeRendering="crispEdges">
      <path d="M748 506L961 381L984 400L771 524Z" />
      <path d="M755 613L968 487L991 504L778 631Z" />
      <path d="M984 400L991 504M771 524L778 631" />
      <path d="M748 506L755 613M961 381L968 487" stroke="#ddd" />
    </g>
    <AxisMark x={492} y={181} label="4" />
    <AxisMark x={227} y={434} label="C" />
    <AxisMark x={1058} y={662} label="B" />
    <g strokeWidth="4" fill="none">
      <path d="M269 624L246 606" stroke="#0f0" />
      <path d="M269 624L300 607" stroke="#f00" />
      <path d="M269 624L267 600" stroke="#0080ff" />
    </g>
    <path d="M238 600L247 602L242 608Z" fill="#0f0" />
    <path d="M308 602L296 604L300 611Z" fill="#f00" />
    <path d="M267 588L271 600L263 600Z" fill="#0080ff" />
    <g fontSize="13">
      <text x="248" y="602" fill="#0f0">Y</text>
      <text x="254" y="598" fill="#0080ff">Z</text>
      <text x="287" y="602" fill="#f00">X</text>
    </g>
  </SceneSvg>
);

/* ---------- offset fields, status bar, taskbar ---------- */

const FieldLabel = styled.label`
  display: flex;
  align-items: center;
  gap: 3px;
  margin-right: 3px;
  color: #777;
`;

const Spin = styled.span`
  display: flex;
  align-items: center;
  width: ${({ $width }) => $width}px;
  height: 23px;
  padding-right: 4px;
  border: 1px solid #777;
  background: #f3f3f3;
  color: #858585;

  input {
    flex: 1;
    min-width: 0;
    text-align: right;
  }
`;

const SpinArrows = styled.svg`
  width: 6px;
  height: 18px;
  margin-left: 8px;
`;

const SpinField = ({ label, unit, value, width = 58 }) => (
  <FieldLabel>
    {label}
    <Spin $width={width}>
      <input aria-label={label || "角度"} defaultValue={value} />
      <SpinArrows viewBox="0 0 6 18"><path d="M0 4L3 1L6 4ZM0 14L3 17L6 14Z" fill="#666" /></SpinArrows>
    </Spin>
    {unit}
  </FieldLabel>
);

const RotateLabel = styled.label`
  display: flex;
  align-items: center;
  gap: 8px;
  margin: 0 5px 0 1px;
`;

const StatusBar = styled.footer`
  position: relative;
  display: flex;
  gap: 2px;
  flex: none;
  height: 21px;
`;

const StatusCell = styled.span`
  flex: ${({ $width }) => ($width ? "none" : 1)};
  width: ${({ $width }) => $width || 0}px;
  padding-left: 1px;
  border: 1px solid #d0d0d0;
  background: linear-gradient(#fff, #f1f1f1);
  line-height: 20px;
  white-space: nowrap;
`;

const ImeBar = styled.div`
  position: absolute;
  right: 0;
  bottom: 0;
  display: flex;
  align-items: center;
  gap: 6px;
  height: 24px;
  padding-right: 4px;
  border: 1px solid #b7cde0;
  border-left: 0;
  background: #fff;
  color: #2173c7;
  font-size: 14px;
  font-weight: 700;
`;

const Taskbar = styled.footer`
  display: flex;
  align-items: center;
  flex: none;
  height: 40px;
  background: #000b10;
  color: #fff;
`;

const StartButton = styled.button`
  display: grid;
  place-items: center;
  flex: none;
  width: 48px;
  height: 40px;
  background: #000;
`;

const Search = styled.label`
  display: flex;
  align-items: center;
  gap: 6px;
  flex: none;
  width: 344px;
  height: 40px;
  padding: 0 12px 0 9px;
  background: #333;
  color: #aaa;
  font-size: 14px;

  input { flex: 1; min-width: 0; }
  input::placeholder { color: #999; }
`;

const Cortana = styled.span`
  width: 21px;
  height: 21px;
  border: 3px solid #fff;
  border-radius: 50%;
`;

const Apps = styled.div`
  display: flex;
  gap: 2px;
  padding-left: 2px;
`;

const AppButton = styled.button`
  display: grid;
  place-items: center;
  width: 48px;
  height: 40px;
  border-bottom: 2px solid ${({ $open }) => ($open ? "#76b9ed" : "transparent")};
  background: ${({ $active }) => ($active ? "#334149" : "none")};
`;

const Tray = styled.div`
  display: flex;
  align-items: center;
  gap: 9px;
  margin-left: auto;
  padding-right: 20px;
`;

const TwoLines = styled.div`
  width: ${({ $width }) => $width}px;
  line-height: 18px;
  text-align: center;
`;

const TrayText = styled.span`
  margin: 0 2px;
  font-size: 13px;
`;

const Notice = styled.button`
  position: relative;
  margin-left: 2px;
`;

const NoticeCount = styled.span`
  position: absolute;
  top: 6px;
  left: 8px;
  width: 16px;
  height: 16px;
  border: 1px solid #aaa;
  border-radius: 50%;
  background: #333;
  font-size: 11px;
  line-height: 14px;
`;

const menus = [
  "文件(F)", "编辑(E)", "楼层(L)", "构件(N)", "绘图(D)", "修改(M)", "钢筋量(Q)", "视图(V)",
  "工具(T)", "云应用(Y)", "BIM应用(I)", "在线服务(S)", "帮助(H)", "版本号(B)",
];

const fileTools = [
  { icon: "define", label: "定义" },
  { icon: "sigma", label: "汇总计算" },
  { icon: "cloud", label: "云检查" },
  { icon: "flush", label: "平齐板顶", off: true },
  { icon: "find", label: "查找图元" },
  { icon: "glasses", label: "查看钢筋量" },
  { icon: "batch", label: "批量选择", off: true },
];

const viewTools = [
  { icon: "cube", label: "三维", caret: true },
  { icon: "cubeTop", label: "俯视", caret: true },
  { icon: "orbit", label: "动态观察", on: true },
  { icon: "cubes", label: "局部三维", off: true },
  "|",
  { icon: "full", label: "全屏" },
  { icon: "zoom", label: "缩放", caret: true },
  { icon: "pan", label: "平移", caret: true },
  { icon: "rotateScreen", label: "屏幕旋转", caret: true, near: true },
  "|",
  { icon: "floors", label: "选择楼层" },
];

const off = (icon, label, rest) => ({ icon, label, off: true, ...rest });

const editTools = [
  off("brushGray", "删除"), "|", off("copy", "复制"), off("mirror", "镜像"), "|",
  off("move", "移动"), off("rotate", "旋转"), "|", off("extend", "延伸"), off("trim", "修剪"), "|",
  off("breakUp", "打断"), off("merge", "合并"), off("split", "分割"), "|",
  off("align", "对齐", { caret: true, near: true }), off("offset", "偏移"), off("stretch", "拉伸"), "|",
  off("gripEdit", "设置夹点"),
];

const partTools = [
  "|",
  { icon: "props", label: "属性" },
  { icon: "editBar", label: "编辑钢筋" },
  { icon: "list", label: "构件列表" },
  { icon: "pick", label: "拾取构件" },
];

const axisTools = [
  { icon: "twoPoint", label: "两点" },
  { icon: "parallel", label: "平行" },
  { icon: "pointAngle", label: "点角", caret: true },
  { icon: "threePoint", label: "三点辅轴", caret: true },
  { icon: "brush", label: "删除辅轴" },
  { icon: "dimension", label: "长度标注", caret: true },
];

const drawTools = [
  { icon: "arrow", label: "选择", caret: true },
  "|",
  { icon: "lineTool", label: "直线" },
  { icon: "pointLength", label: "点加长度" },
  { icon: "arc", label: "三点画弧", caret: true },
];

const shapeTools = [
  { icon: "rect", label: "矩形" },
  "|",
  { icon: "smart", label: "智能布置", caret: true, near: true },
];

const modeTools = [
  { icon: "ortho", label: "正交" },
  { icon: "snap", label: "对象捕捉", on: true },
  { icon: "dynInput", label: "动态输入", on: true },
];

const snapTools = [
  { icon: "cross", label: "交点" },
  { icon: "perp", label: "垂点", on: true },
  { icon: "mid", label: "中点", on: true },
  { icon: "vertex", label: "顶点" },
  { icon: "coord", label: "坐标" },
];

const apps = [
  ["fan"], ["swirl"], ["edge"], ["store"], ["explorer"],
  ["swirlBlue", true], ["browser", true], ["glodon", true, true], ["notes", true],
];

const App = () => (
  <Page>
    <GlobalStyle />
    <TitleBar>
      <Icon name="glodon" />
      <TitleText>
        <Han>广联达</Han>BIM<Han>钢筋算量软件</Han>
        {" GGJ2013 - [C:\\Users\\Administrator.PC-2016127NRHM\\Desktop\\"}
        <Han>白龙村</Han>-2016-08-25-13-27-07(2166<Han>版</Han>).GGJ12]
      </TitleText>
      <CpuBall>74</CpuBall>
      <WindowButtons>
        <button type="button" aria-label="最小化">
          <svg viewBox="0 0 16 16"><path d="M1 8.500H11" stroke="#000" /></svg>
        </button>
        <button type="button" aria-label="还原">
          <svg viewBox="0 0 16 16"><path d="M2.500 4.500H9.500V12.500H2.500ZM4.500 4V2.500H11.500V10.500H10" fill="none" stroke="#000" /></svg>
        </button>
        <button type="button" aria-label="关闭">
          <svg viewBox="0 0 16 16"><path d="M2 3L12 13M12 3L2 13" stroke="#000" /></svg>
        </button>
      </WindowButtons>
    </TitleBar>

    <MenuBar>
      {menus.map((m) => (
        <MenuItem type="button" key={m}>{m}</MenuItem>
      ))}
      <MenuEntry type="button"><Icon name="fileAdd" />新建变更<Caret /></MenuEntry>
      <MenuEntry type="button"><Icon name="robot" />广小二</MenuEntry>
      <Tip href="#tip">如何绘制不同标高的筏..</Tip>
      <Account>
        <MenuEntry type="button"><Icon name="user" />13907298339<Caret /></MenuEntry>
        <MenuEntry type="button">造价豆:0</MenuEntry>
        <Icon name="bell" />
        <More type="button" aria-label="更多">»</More>
      </Account>
    </MenuBar>

    <TopTools>
      <ToolGroup $min={150} $end={2}>
        <Tool icon="file" />
        <Tool icon="open" caret />
        <Tool icon="save" />
        <Divider />
        <Tool icon="undo" caret />
        <More type="button" aria-label="更多">»</More>
      </ToolGroup>
      <ToolGroup $min={550} $end={2}>
        <ToolSet items={fileTools} />
        <More type="button" aria-label="更多">»</More>
      </ToolGroup>
      <ToolGroup $grow>
        <ToolSet items={viewTools} />
        <More type="button" aria-label="更多">»</More>
      </ToolGroup>
    </TopTools>

    <Body>
      <NavPanel />
      <Main>
        <ToolRow>
          <ToolGroup>
            <Grip />
            <ToolSet items={editTools} />
          </ToolGroup>
        </ToolRow>
        <ToolRow $gap={72}>
          <ToolGroup>
            <Grip />
            <Combo name="楼层" value="第4层" width={58} />
            <Combo name="构件类别" value="自定义" width={69} />
            <Combo name="构件类型" value="自定义线" width={69} />
            <Combo name="构件" value="ZDYX-17" width={69} />
            <ToolSet items={partTools} />
          </ToolGroup>
          <ToolGroup>
            <Grip />
            <ToolSet items={axisTools} />
          </ToolGroup>
        </ToolRow>
        <ToolRow>
          <ToolGroup>
            <Grip />
            <ToolSet items={drawTools} />
            <Combo name="画弧方式" value="" width={55} />
            <ToolSet items={shapeTools} />
          </ToolGroup>
          <ToolGroup $min={30}>
            <Grip />
          </ToolGroup>
        </ToolRow>

        <Viewport>
          <Scene />
          <FloatPanel>
            <FloatTitle>钢筋显示控制面板</FloatTitle>
            <CheckList>
              {["水平纵筋", "横向钢筋", "显示其它图元", "显示详细公式"].map((t) => (
                <label key={t}>
                  <Check type="checkbox" defaultChecked />
                  {t}
                </label>
              ))}
            </CheckList>
          </FloatPanel>
        </Viewport>

        <ToolRow $tall>
          <ToolGroup $end={0}>
            <Grip />
            <ToolSet items={modeTools} />
          </ToolGroup>
          <ToolGroup>
            <Grip />
            <ToolSet items={snapTools} />
          </ToolGroup>
          <ToolGroup>
            <Grip />
            <Combo name="偏移方式" value="不偏移" width={58} />
            <Divider />
            <SpinField label="X=" unit="mm" value="0" />
            <SpinField label="Y=" unit="mm" value="0" />
            <Divider />
            <RotateLabel>
              <Check type="checkbox" />
              旋转
            </RotateLabel>
            <SpinField unit="°" value="0.000" width={68} />
          </ToolGroup>
        </ToolRow>
      </Main>
    </Body>

    <StatusBar>
      <StatusCell $width={148}><Latin>X=37893 Y=6161</Latin></StatusCell>
      <StatusCell $width={78}>层高<Latin>:2.8m</Latin></StatusCell>
      <StatusCell $width={98}>底标高<Latin>:10.27m</Latin></StatusCell>
      <StatusCell $width={48}><Latin>1(4)</Latin></StatusCell>
      <StatusCell />
      <ImeBar>
        <Icon name="sogou" size={28} />
        英
        <Icon name="comma" />
        <Icon name="mic" />
        <Icon name="keyboardBlue" />
        <Icon name="person" />
        <Icon name="shirt" />
        <Icon name="wrench" />
      </ImeBar>
    </StatusBar>

    <Taskbar>
      <StartButton type="button" aria-label="开始"><Icon name="windows" /></StartButton>
      <Search>
        <Cortana />
        <input placeholder="在这里输入你要搜索的内容" />
        <Icon name="micThin" />
      </Search>
      <Apps>
        {apps.map(([name, open, active]) => (
          <AppButton type="button" key={name} aria-label={name} $open={open} $active={active}>
            <Icon name={name} size={22} />
          </AppButton>
        ))}
      </Apps>
      <Tray>
        <TwoLines $width={60}>69%<br />CPU使用</TwoLines>
        <Icon name="chevronUp" />
        <Icon name="battery" />
        <Icon name="wifi" />
        <Icon name="sound" />
        <Icon name="keyboard" size={22} />
        <TrayText>英</TrayText>
        <Icon name="sogou" />
        <TwoLines $width={76}>13:53<br />2017/9/6</TwoLines>
        <Notice type="button" aria-label="通知">
          <Icon name="notice" size={20} />
          <NoticeCount>2</NoticeCount>
        </Notice>
      </Tray>
    </Taskbar>
  </Page>
);

export default App;
